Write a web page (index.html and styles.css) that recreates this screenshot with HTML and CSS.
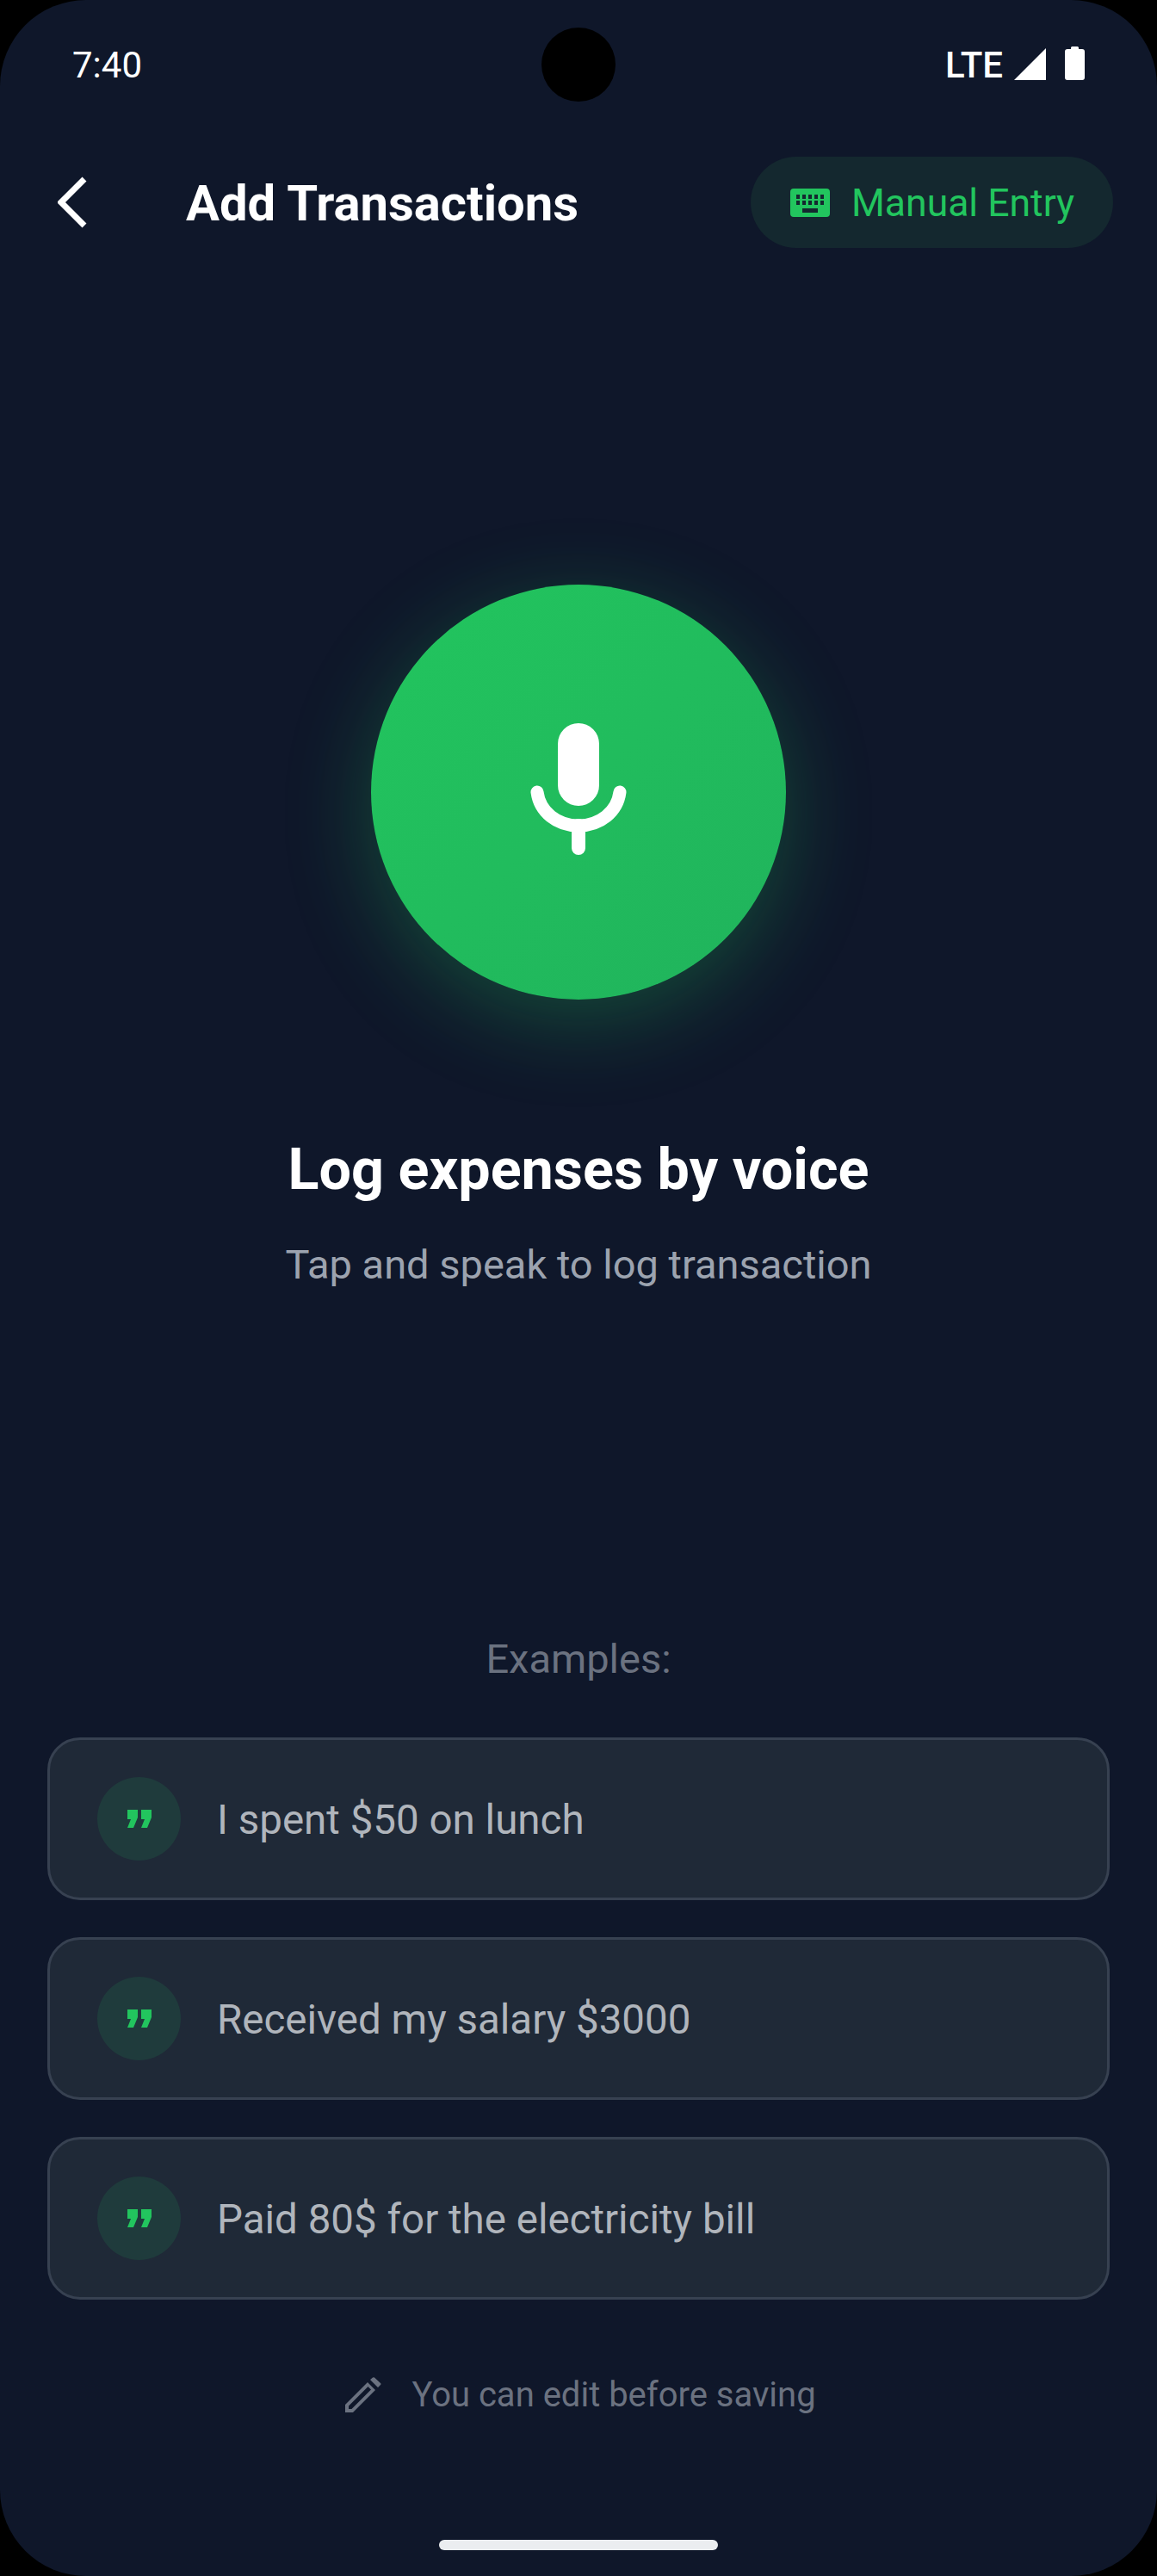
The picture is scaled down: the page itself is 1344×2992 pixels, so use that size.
FILE: index.html
```html
<!DOCTYPE html>
<html lang="en">
<head>
  <meta charset="UTF-8">
  <meta name="viewport" content="width=device-width, initial-scale=1.0">
  <title>Add Transactions</title>
  <link rel="stylesheet" href="styles.css">
</head>
<body>
  <div class="phone">
    <div class="status-bar">
      <span class="time">7:40</span>
      <span class="camera"></span>
      <div class="status-right">
        <span class="lte">LTE</span>
        <svg class="signal" viewBox="0 0 37 37"><path d="M37 0V37H0Z"/></svg>
        <svg class="battery" viewBox="0 0 23 39"><path d="M7 3V1.500Q7 0 8.500 0H14.500Q16 0 16 1.500V3H20Q23 3 23 6V36Q23 39 20 39H3Q0 39 0 36V6Q0 3 3 3Z"/></svg>
      </div>
    </div>

    <header class="top-bar">
      <svg class="back" viewBox="0 0 34 60"><path d="M31 3L4 30L31 57"/></svg>
      <h1 class="title">Add Transactions</h1>
      <div class="manual-btn">
        <svg class="keyboard" viewBox="0 0 46 33">
          <path fill-rule="evenodd" d="M4 0H42Q46 0 46 4V29Q46 33 42 33H4Q0 33 0 29V4Q0 0 4 0ZM7 7V12H11V7ZM14 7V12H18V7ZM21 7V12H25V7ZM28 7V12H32V7ZM35 7V12H39V7ZM7 14V19H11V14ZM14 14V19H18V14ZM21 14V19H25V14ZM28 14V19H32V14ZM35 14V19H39V14ZM14 23V28H32V23Z"/>
        </svg>
        <span>Manual Entry</span>
      </div>
    </header>

    <section class="voice">
      <div class="mic-btn">
        <svg class="mic" viewBox="0 0 112 154">
          <rect x="32" y="0" width="48" height="96" rx="24"/>
          <path class="mic-arc" d="M8 80C11 103 31 119 56 119C81 119 101 103 104 80"/>
          <path class="mic-stem" d="M56 119V145"/>
        </svg>
      </div>
      <h2 class="voice-title">Log expenses by voice</h2>
      <p class="voice-sub">Tap and speak to log transaction</p>
    </section>

    <section class="examples">
      <p class="examples-label">Examples:</p>
      <div class="card">
        <span class="quote-badge"><svg class="quote" viewBox="0 0 29 21"><path d="M1 0H13V9L8 21H1L5 11H1ZM17 0H29V9L24 21H17L21 11H17Z"/></svg></span>
        <span class="card-text">I spent $50 on lunch</span>
      </div>
      <div class="card">
        <span class="quote-badge"><svg class="quote" viewBox="0 0 29 21"><path d="M1 0H13V9L8 21H1L5 11H1ZM17 0H29V9L24 21H17L21 11H17Z"/></svg></span>
        <span class="card-text">Received my salary $3000</span>
      </div>
      <div class="card">
        <span class="quote-badge"><svg class="quote" viewBox="0 0 29 21"><path d="M1 0H13V9L8 21H1L5 11H1ZM17 0H29V9L24 21H17L21 11H17Z"/></svg></span>
        <span class="card-text">Paid 80$ for the electricity bill</span>
      </div>
    </section>

    <div class="hint">
      <svg class="pencil" viewBox="0 0 42 41"><path fill-rule="evenodd" d="M0 32L26 6L35 15L9 41H0ZM4 33.500V37H7.500L30 14.500L26.500 11ZM29 3L32 0.500Q33 0 34 0.500L41 7Q42 8 41 9L38 12Z"/></svg>
      <span>You can edit before saving</span>
    </div>

    <div class="home-bar"></div>
  </div>
</body>
</html>
```

FILE: styles.css
```css
* { box-sizing: border-box; }
html, body { margin: 0; padding: 0; background: #000; }
body { font-family: Roboto, sans-serif; font-stretch: 97%; }

.phone { width: 1344px; height: 2992px; background: #0f172a; border-radius: 100px; overflow: hidden; display: flex; flex-direction: column; }

.status-bar { display: grid; grid-template-columns: 1fr 86px 1fr; align-items: center; height: 86px; margin-top: 32px; padding: 0 84px; color: #fff; font-stretch: 100%; }
.time { font-size: 42px; }
.camera { width: 86px; height: 86px; border-radius: 50%; background: #000; }
.status-right { display: flex; align-items: center; justify-content: flex-end; }
.lte { font-size: 42px; font-weight: 500; }
.signal { width: 37px; height: 37px; fill: #fff; margin-left: 13px; margin-top: -2px; }
.battery { width: 23px; height: 39px; fill: #fff; margin-left: 22px; margin-top: -4px; }

.top-bar { display: flex; align-items: center; height: 106px; margin-top: 64px; padding: 0 51px 0 67px; }
.back { width: 34px; height: 60px; fill: none; stroke: #fff; stroke-width: 7; }
.title { margin: 2px 0 0 115px; font-size: 58px; font-weight: 700; color: #fff; }
.manual-btn { display: flex; align-items: center; gap: 25px; height: 106px; width: 421px; margin-left: auto; padding-left: 46px; border-radius: 53px; background: #14282f; color: #22c55e; font-size: 44.500px; }
.manual-btn span { padding-top: 2px; }
.keyboard { width: 46px; height: 33px; fill: #22c55e; }

.voice { display: flex; flex-direction: column; align-items: center; margin-top: 391px; }
.mic-btn { display: flex; align-items: center; justify-content: center; width: 482px; height: 482px; border-radius: 50%; background: linear-gradient(135deg, #22c55e, #20b35c); box-shadow: 0 24px 100px rgba(34, 197, 94, 0.3); }
.mic { width: 112px; height: 154px; fill: #fff; margin-top: -6px; }
.mic-arc { fill: none; stroke: #fff; stroke-width: 15; stroke-linecap: round; }
.mic-stem { fill: none; stroke: #fff; stroke-width: 16; stroke-linecap: round; }
.voice-title { margin: 151px 0 0; font-size: 66.500px; font-weight: 700; line-height: 92px; color: #fff; }
.voice-sub { margin: 33px 0 0; font-size: 47px; line-height: 64px; color: #9ca3af; }

.examples { display: flex; flex-direction: column; gap: 43px; margin-top: 396px; padding: 0 55px; }
.examples-label { margin: 0 0 18px; text-align: center; font-size: 47px; line-height: 60px; color: #6b7280; }
.card { display: flex; align-items: center; gap: 42px; height: 189px; padding-left: 55px; border: 3px solid #374151; border-radius: 38px; background: #1f2937; }
.quote-badge { display: flex; align-items: center; justify-content: center; width: 97px; height: 97px; border-radius: 50%; background: #1f3b3c; }
.quote { width: 29px; height: 21px; fill: #22c55e; }
.card-text { font-size: 47.500px; color: #b0b5bc; padding-top: 2px; }

.hint { display: flex; align-items: center; justify-content: center; gap: 35px; margin-top: 87px; padding-left: 5px; color: #6b7280; font-size: 40px; }
.pencil { width: 42px; height: 41px; fill: #6b7280; }

.home-bar { width: 324px; height: 12px; border-radius: 6px; background: #ebedf0; margin: auto auto 30px; }
```
